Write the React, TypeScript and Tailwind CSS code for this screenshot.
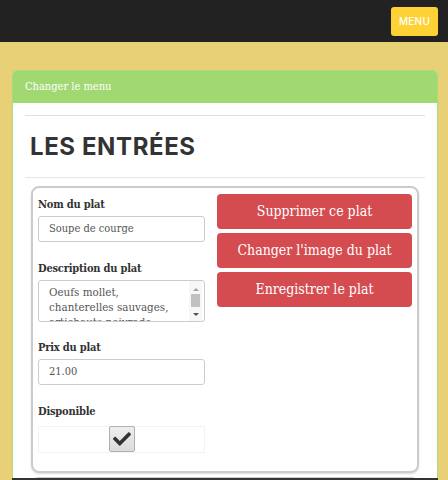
import { FaCheck } from "react-icons/fa";

const slab = { fontFamily: "'DejaVu Serif Condensed', 'DejaVu Serif', serif" };
const sans = { fontFamily: "Inter, 'DejaVu Sans', sans-serif" };

function Label({ children }: { children: string }) {
  return (
    <div className="text-[11px] leading-4 font-bold text-[#333] tracking-[-0.2px]" style={slab}>
      {children}
    </div>
  );
}

function TextInput({ value }: { value: string }) {
  return (
    <div
      className="h-[26px] border border-[#ccc] rounded-[3px] px-[10px] flex items-center text-[11px] text-[#555] bg-white"
      style={slab}
    >
      {value}
    </div>
  );
}

// textarea with the classic (non-overlay) scrollbar drawn by hand
function FakeTextarea({ lines }: { lines: string[] }) {
  return (
    <div className="mt-[3px] h-[42px] border border-[#ccc] rounded-[3px] flex overflow-hidden bg-white">
      <div className="flex-1 pl-[10px] pt-[4px] text-[11.5px] leading-[15px] text-[#555] overflow-hidden" style={slab}>
        {lines.map((l) => (
          <div key={l} className="whitespace-nowrap">{l}</div>
        ))}
      </div>
      <div className="w-[13px] mr-[2px] flex flex-col items-center bg-[#f7f7f7]">
        <div className="h-[10px] flex items-end justify-center">
          <div className="w-0 h-0 border-x-[3px] border-x-transparent border-b-[3px] border-b-[#a3a3a3]" />
        </div>
        <div className="mt-[3px] w-[9px] h-[13px] bg-[#c1c1c1]" />
        <div className="flex-1 flex items-center justify-center">
          <div className="w-0 h-0 border-x-[3px] border-x-transparent border-t-[3px] border-t-[#505050]" />
        </div>
      </div>
    </div>
  );
}

function DishCard() {
  return (
    <div className="mx-[6px] border-2 border-[#cbcbcb] rounded-[8px] pt-[6px] px-[5px] pb-[18px] flex gap-3 shadow-[0_1px_2px_rgba(0,0,0,0.15)]">
      {/* left: form */}
      <div className="w-[167px] pt-[3px]">
        <Label>Nom du plat</Label>
        <div className="mt-[3px]">
          <TextInput value="Soupe de courge" />
        </div>

        <div className="mt-[19px]">
          <Label>Description du plat</Label>
        </div>
        <FakeTextarea lines={["Oeufs mollet,", "chanterelles sauvages,", "artichauts poivrade"]} />

        <div className="mt-[18px]">
          <Label>Prix du plat</Label>
        </div>
        <div className="mt-[3px]">
          <TextInput value="21.00" />
        </div>

        <div className="mt-[19px]">
          <Label>Disponible</Label>
        </div>
        <div className="mt-[6px] h-[27px] border border-[#f3f3f3] flex justify-center">
          <button className="w-[26px] h-[26px] -mt-px rounded-[2px] border border-[#b0b0b0] bg-gradient-to-b from-[#eeeeee] to-[#dcdcdc] flex items-center justify-center text-[#333]">
            <FaCheck className="w-[18px] h-[18px]" />
          </button>
        </div>
      </div>

      {/* right: actions */}
      <div className="flex-1 flex flex-col gap-1">
        {["Supprimer ce plat", "Changer l'image du plat", "Enregistrer le plat"].map((t) => (
          <button
            key={t}
            className="h-[35px] rounded-[4px] bg-[#d54c50] text-white text-[14px]"
            style={slab}
          >
            {t}
          </button>
        ))}
      </div>
    </div>
  );
}

export default function App() {
  return (
    <div className="w-[448px] h-[480px] overflow-hidden bg-[#e8d077] relative">
      <nav className="h-[42px] bg-[#222] flex items-center justify-end pr-[10px]">
        <button
          className="w-[47px] h-[29px] rounded-[3px] bg-[#fed136] text-white text-[10px] font-medium tracking-wide"
          style={sans}
        >
          MENU
        </button>
      </nav>

      <div className="pt-[28px] pl-3 pr-[10px]">
        <div className="rounded-[4px] border border-[#a7dc7c] bg-white overflow-hidden">
          <div className="h-8 bg-[#a1d871] flex items-center px-3 text-white text-[11px]" style={slab}>
            Changer le menu
          </div>
          <div className="px-3 pt-3">
            <hr className="border-[#e0e0e0]" />
            <h1 className="mt-[18px] text-[24px] leading-[26px] font-bold text-[#333] tracking-wide pl-[5px]" style={sans}>
              LES ENTRÉES
            </h1>
            <hr className="mt-[17px] border-[#e6e6e6]" />
            <div className="mt-2">
              <DishCard />
            </div>
            <div className="mt-1 mx-[6px] h-10 border-2 border-[#cbcbcb] rounded-[8px]" />
          </div>
        </div>
      </div>

      <div className="absolute left-3 right-[10px] bottom-0 h-[2px] bg-[#333]" />
    </div>
  );
}
